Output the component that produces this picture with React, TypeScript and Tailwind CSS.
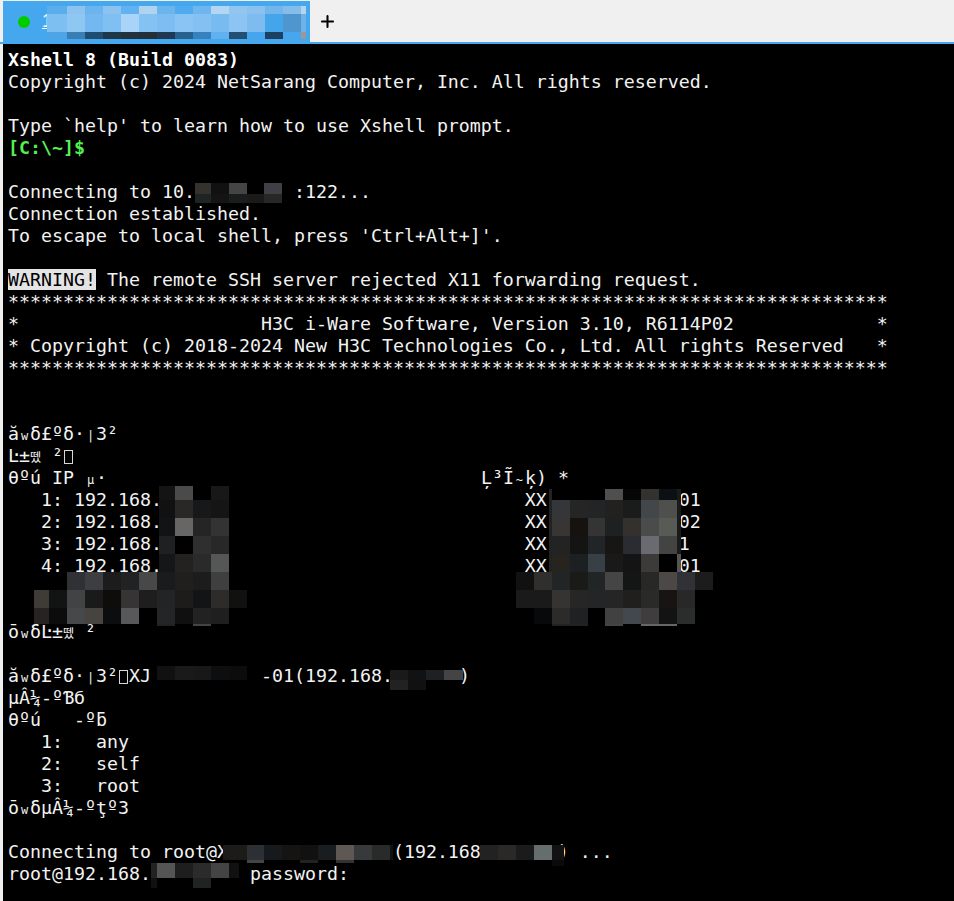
import React from "react";
import { Plus } from "lucide-react";

type Block = [number, number, number, number, string];

// row helper: [y, height, [[x, colour], ...], endX]
function row(y: number, h: number, cells: [number, string][], end: number): Block[] {
  return cells.map(([x, c], i) => [x, y, (i + 1 < cells.length ? cells[i + 1][0] : end) - x, h, c]);
}

const TAB_X = [47, 67, 85, 103, 121, 139, 157, 175, 193, 211, 229, 247, 265, 283, 301];
const zip = (xs: number[], cs: string[]): [number, string][] => xs.map((x, i) => [x, cs[i]]);
const L = [34, 49, 67, 85, 103, 121, 139, 157, 175, 193, 211, 229];
const R = [552, 570, 588, 605, 623, 641, 659];
const R2 = [516, 534, 552, 570, 588, 605, 623, 641, 659, 677, 695];

const blocks: Block[] = [
  ...row(6, 8, zip(TAB_X, ["#5aaeee", "#8fc3ef", "#6cb4ee", "#8cc2ef", "#62b1f0", "#b0d4f0", "#6cb5ec", "#4fabf0", "#70b6ee", "#b3d6f2", "#93c6ef", "#8bc1ef", "#73b6ec", "#85bdea", "#b5d5ee"]), 306),
  ...row(14, 18, zip(TAB_X, ["#7dbff1", "#8fc7f3", "#73b8f0", "#80bff2", "#a9d3f7", "#84c2f3", "#7dbdf2", "#89c4f4", "#84c1f2", "#78bbf0", "#8cc5f3", "#7ebcf0", "#43a5ea", "#4f96cf", "#6fb2e8"]), 306),
  ...row(32, 7, zip(TAB_X, ["#4fa4e6", "#3b7eb4", "#1f4d70", "#1f3747", "#21333f", "#22303a", "#1f3a50", "#27618c", "#3881bd", "#61b0ef", "#234f72", "#45a5ee", "#1d4060", "#48a6ee", "#999999"]), 306),

  ...row(183, 11, zip([195, 211, 229, 247, 264], ["#35322e", "#111111", "#444444", "#000000", "#3e4046"]), 282),
  ...row(194, 9, zip([195, 211, 229, 247, 264], ["#1e2423", "#141414", "#1b1c1c", "#1b1a18", "#272727"]), 282),

  ...row(486, 14, zip([159, 175, 193, 211], ["#141414", "#4a4a4a", "#000000", "#181818"]), 229),
  ...row(500, 18, zip([159, 175, 193, 211], ["#111111", "#2a2826", "#16181a", "#151515"]), 229),
  ...row(518, 18, zip([159, 175, 193, 211], ["#111314", "#666666", "#252525", "#333333"]), 229),
  ...row(536, 18, zip([159, 175, 193, 211], ["#1f2022", "#000000", "#2f2f2f", "#282828"]), 229),
  ...row(554, 18, zip([159, 175, 193, 211], ["#151617", "#242220", "#2a2a2a", "#555757"]), 229),
  ...row(572, 18, zip(L.slice(2, 11), ["#303135", "#3e3e40", "#1c1c1c", "#202224", "#484848", "#1a1b1d", "#201f1d", "#1c1c1c", "#3f3f3f"]), 229),
  ...row(590, 18, zip(L, ["#3f3c38", "#121313", "#424345", "#1a1a1a", "#0e0d0b", "#363434", "#1e1e1e", "#232425", "#1d1c1a", "#121416", "#2e2c2a", "#111111"]), 247),
  ...row(608, 16, zip(L.slice(0, 11), ["#272321", "#0c0c0c", "#47484a", "#47433f", "#0b0d0f", "#58585a", "#000000", "#232527", "#101010", "#222222", "#1f1f1f"]), 229),
  [157, 624, 18, 2, "#222222"],
  [193, 624, 18, 2, "#444444"],

  [549, 489, 3, 83, "#222222"],
  ...row(489, 11, zip(R, ["#000000", "#000000", "#000000", "#4f4f4f", "#060606", "#343230", "#0a1013"]), 677),
  ...row(500, 18, zip(R, ["#34363a", "#252525", "#222426", "#222120", "#1a1c1b", "#43474a", "#4f4f4d"]), 677),
  ...row(518, 18, zip(R, ["#373634", "#16120f", "#343434", "#1e2121", "#33302e", "#4a4b4b", "#585a55"]), 677),
  ...row(536, 18, zip(R, ["#232323", "#141412", "#222528", "#181614", "#2b2c31", "#6a6b70", "#434343"]), 677),
  ...row(554, 18, zip(R, ["#27231f", "#1d2023", "#394045", "#191919", "#141414", "#3d3b38", "#000000"]), 677),
  [677, 489, 4, 65, "#1a1a1a"],
  [677, 554, 4, 18, "#555555"],
  ...row(572, 18, zip(R2, ["#111111", "#302f2e", "#222526", "#1a1a18", "#222526", "#454545", "#131615", "#282827", "#4c4845", "#303236", "#1c1c1c"]), 713),
  ...row(590, 18, zip(R2.slice(0, 10), ["#1a1a1a", "#1a1a1a", "#353432", "#262626", "#232526", "#252525", "#211f1d", "#2a2a28", "#181412", "#282828"]), 695),
  ...row(608, 16, zip(R2.slice(0, 10), ["#000000", "#08090b", "#2c2b29", "#1f2123", "#000000", "#414141", "#43474e", "#3f3d3d", "#131313", "#2b2d2c"]), 695),
  [552, 624, 36, 2, "#222222"],
  [605, 624, 18, 2, "#444444"],
  [641, 624, 36, 2, "#666666"],

  ...row(666, 14, zip([153, 157, 175, 193, 211, 229], ["#000000", "#111111", "#1a1a1a", "#181818", "#0c0e10", "#0c0c0c"]), 247),
  ...row(670, 10, zip([390, 408, 426, 444], ["#1a1a1a", "#101214", "#1e2023", "#444444"]), 463),
  ...row(680, 10, zip([390, 408], ["#222222", "#111111"]), 426),

  ...row(845, 15, zip([223, 247, 264, 282, 300, 318, 336, 354, 372, 390], ["#1c1b19", "#2c2f33", "#171a1c", "#161412", "#111111", "#1a1d20", "#5e5753", "#363a3a", "#292b2a", "#111111"]), 393),
  [247, 860, 17, 3, "#444444"],
  [300, 860, 18, 3, "#222222"],
  [336, 860, 18, 3, "#333333"],
  ...row(845, 15, zip([480, 498, 516, 534, 552], ["#222222", "#2b2927", "#1b1b1b", "#666d6d", "#121212"]), 564),
  [552, 860, 12, 6, "#0a0a0a"],

  ...row(863, 15, zip([151, 157, 175, 193, 211, 229], ["#222222", "#555555", "#1e1e1e", "#2b2b2b", "#444444", "#111111"]), 239),
  [151, 878, 6, 10, "#111111"],
  [193, 878, 18, 10, "#1f2423"],
];

const SMALL = new Set(["w", "뗐", "~", "μ", "|"]);

function G({ text }: { text: string }) {
  return (
    <>
      {[...text].map((c, i) =>
        c === "▯" ? (
          <span key={i} className="inline-block w-[11px] text-center align-[-2px]">
            <span className="inline-block h-[14px] w-[9px] border border-[#d8d8d8]" />
          </span>
        ) : (
          <span
            key={i}
            className={
              "inline-block w-[11px] text-center " + (SMALL.has(c) ? "text-[12px]" : "text-[18.27px]")
            }
          >
            {c}
          </span>
        ),
      )}
    </>
  );
}

function Line({ children, className = "" }: { children?: React.ReactNode; className?: string }) {
  return <div className={"h-[22px] overflow-visible whitespace-pre " + className}>{children}</div>;
}

export default function App() {
  return (
    <div className="relative flex h-[901px] w-[954px] flex-col overflow-hidden bg-[#f0f0f0]">
      <div className="flex h-[42px] shrink-0 items-end bg-[#f0f0f0]">
        <div className="ml-[3px] flex h-[41px] w-[307px] items-center bg-[#45a7ee] pl-[15px]">
          <span className="h-3 w-3 rounded-full bg-[#00cc00]" />
          <span className="ml-3 font-['Liberation_Sans',sans-serif] text-[18px] text-white underline">1</span>
        </div>
        <div className="ml-2 flex h-[42px] items-center text-black">
          <Plus size={19} strokeWidth={2.6} />
        </div>
      </div>
      <div className="h-[2px] shrink-0 bg-[#45a7ee]" />
      <div className="ml-[3px] flex-1 bg-black pl-[5px] pt-[5px] font-['DejaVu_Sans_Mono','Noto_Sans_CJK_KR',monospace] text-[18.27px] leading-[22px] text-[#f2f2f2]">
        <Line className="font-bold text-white">Xshell 8 (Build 0083)</Line>
        <Line>Copyright (c) 2024 NetSarang Computer, Inc. All rights reserved.</Line>
        <Line />
        <Line>Type `help' to learn how to use Xshell prompt.</Line>
        <Line className="font-bold text-[#55ee55]">[C:\~]$</Line>
        <Line />
        <Line>Connecting to 10.         :122...</Line>
        <Line>Connection established.</Line>
        <Line>To escape to local shell, press 'Ctrl+Alt+]'.</Line>
        <Line />
        <Line>
          <span className="bg-[#e4e4e4] text-black">WARNING!</span> The remote SSH server rejected X11 forwarding request.
        </Line>
        <Line>{"*".repeat(80)}</Line>
        <Line>{"*                      H3C i-Ware Software, Version 3.10, R6114P02             *"}</Line>
        <Line>{"* Copyright (c) 2018-2024 New H3C Technologies Co., Ltd. All rights Reserved   *"}</Line>
        <Line>{"*".repeat(80)}</Line>
        <Line />
        <Line />
        <Line><G text="ăwδ£ºδ·|3²" /></Line>
        <Line><G text="Ŀ±뗐 ²▯" /></Line>
        <Line>
          <G text="θºú IP μ·" />
          {"                                  "}
          <G text="Ļ³Ĩ~ķ) *" />
        </Line>
        <Line>{"   1: 192.168.                                 XX.           01"}</Line>
        <Line>{"   2: 192.168.                                 XX.           02"}</Line>
        <Line>{"   3: 192.168.                                 XX.           1"}</Line>
        <Line>{"   4: 192.168.                                 XX.           01"}</Line>
        <Line />
        <Line />
        <Line><G text="ōwδĿ±뗐 ²" /></Line>
        <Line />
        <Line>
          <G text="ăwδ£ºδ·|3²▯" />
          {"XJ          -01(192.168.      )"}
        </Line>
        <Line><G text="µÂ¼-ºƁб" /></Line>
        <Line><G text="θºú   -ºƃ" /></Line>
        <Line>{"   1:   any"}</Line>
        <Line>{"   2:   self"}</Line>
        <Line>{"   3:   root"}</Line>
        <Line><G text="ōwδµÂ¼-ºţº3" /></Line>
        <Line />
        <Line>{"Connecting to root@X               (192.168       ) ..."}</Line>
        <Line>{"root@192.168.         password:"}</Line>
      </div>
      <svg className="pointer-events-none absolute left-0 top-0" width="954" height="901" shapeRendering="crispEdges">
        {blocks.map(([x, y, w, h, c], i) => (
          <rect key={i} x={x} y={y} width={w} height={h} fill={c} />
        ))}
      </svg>
    </div>
  );
}
